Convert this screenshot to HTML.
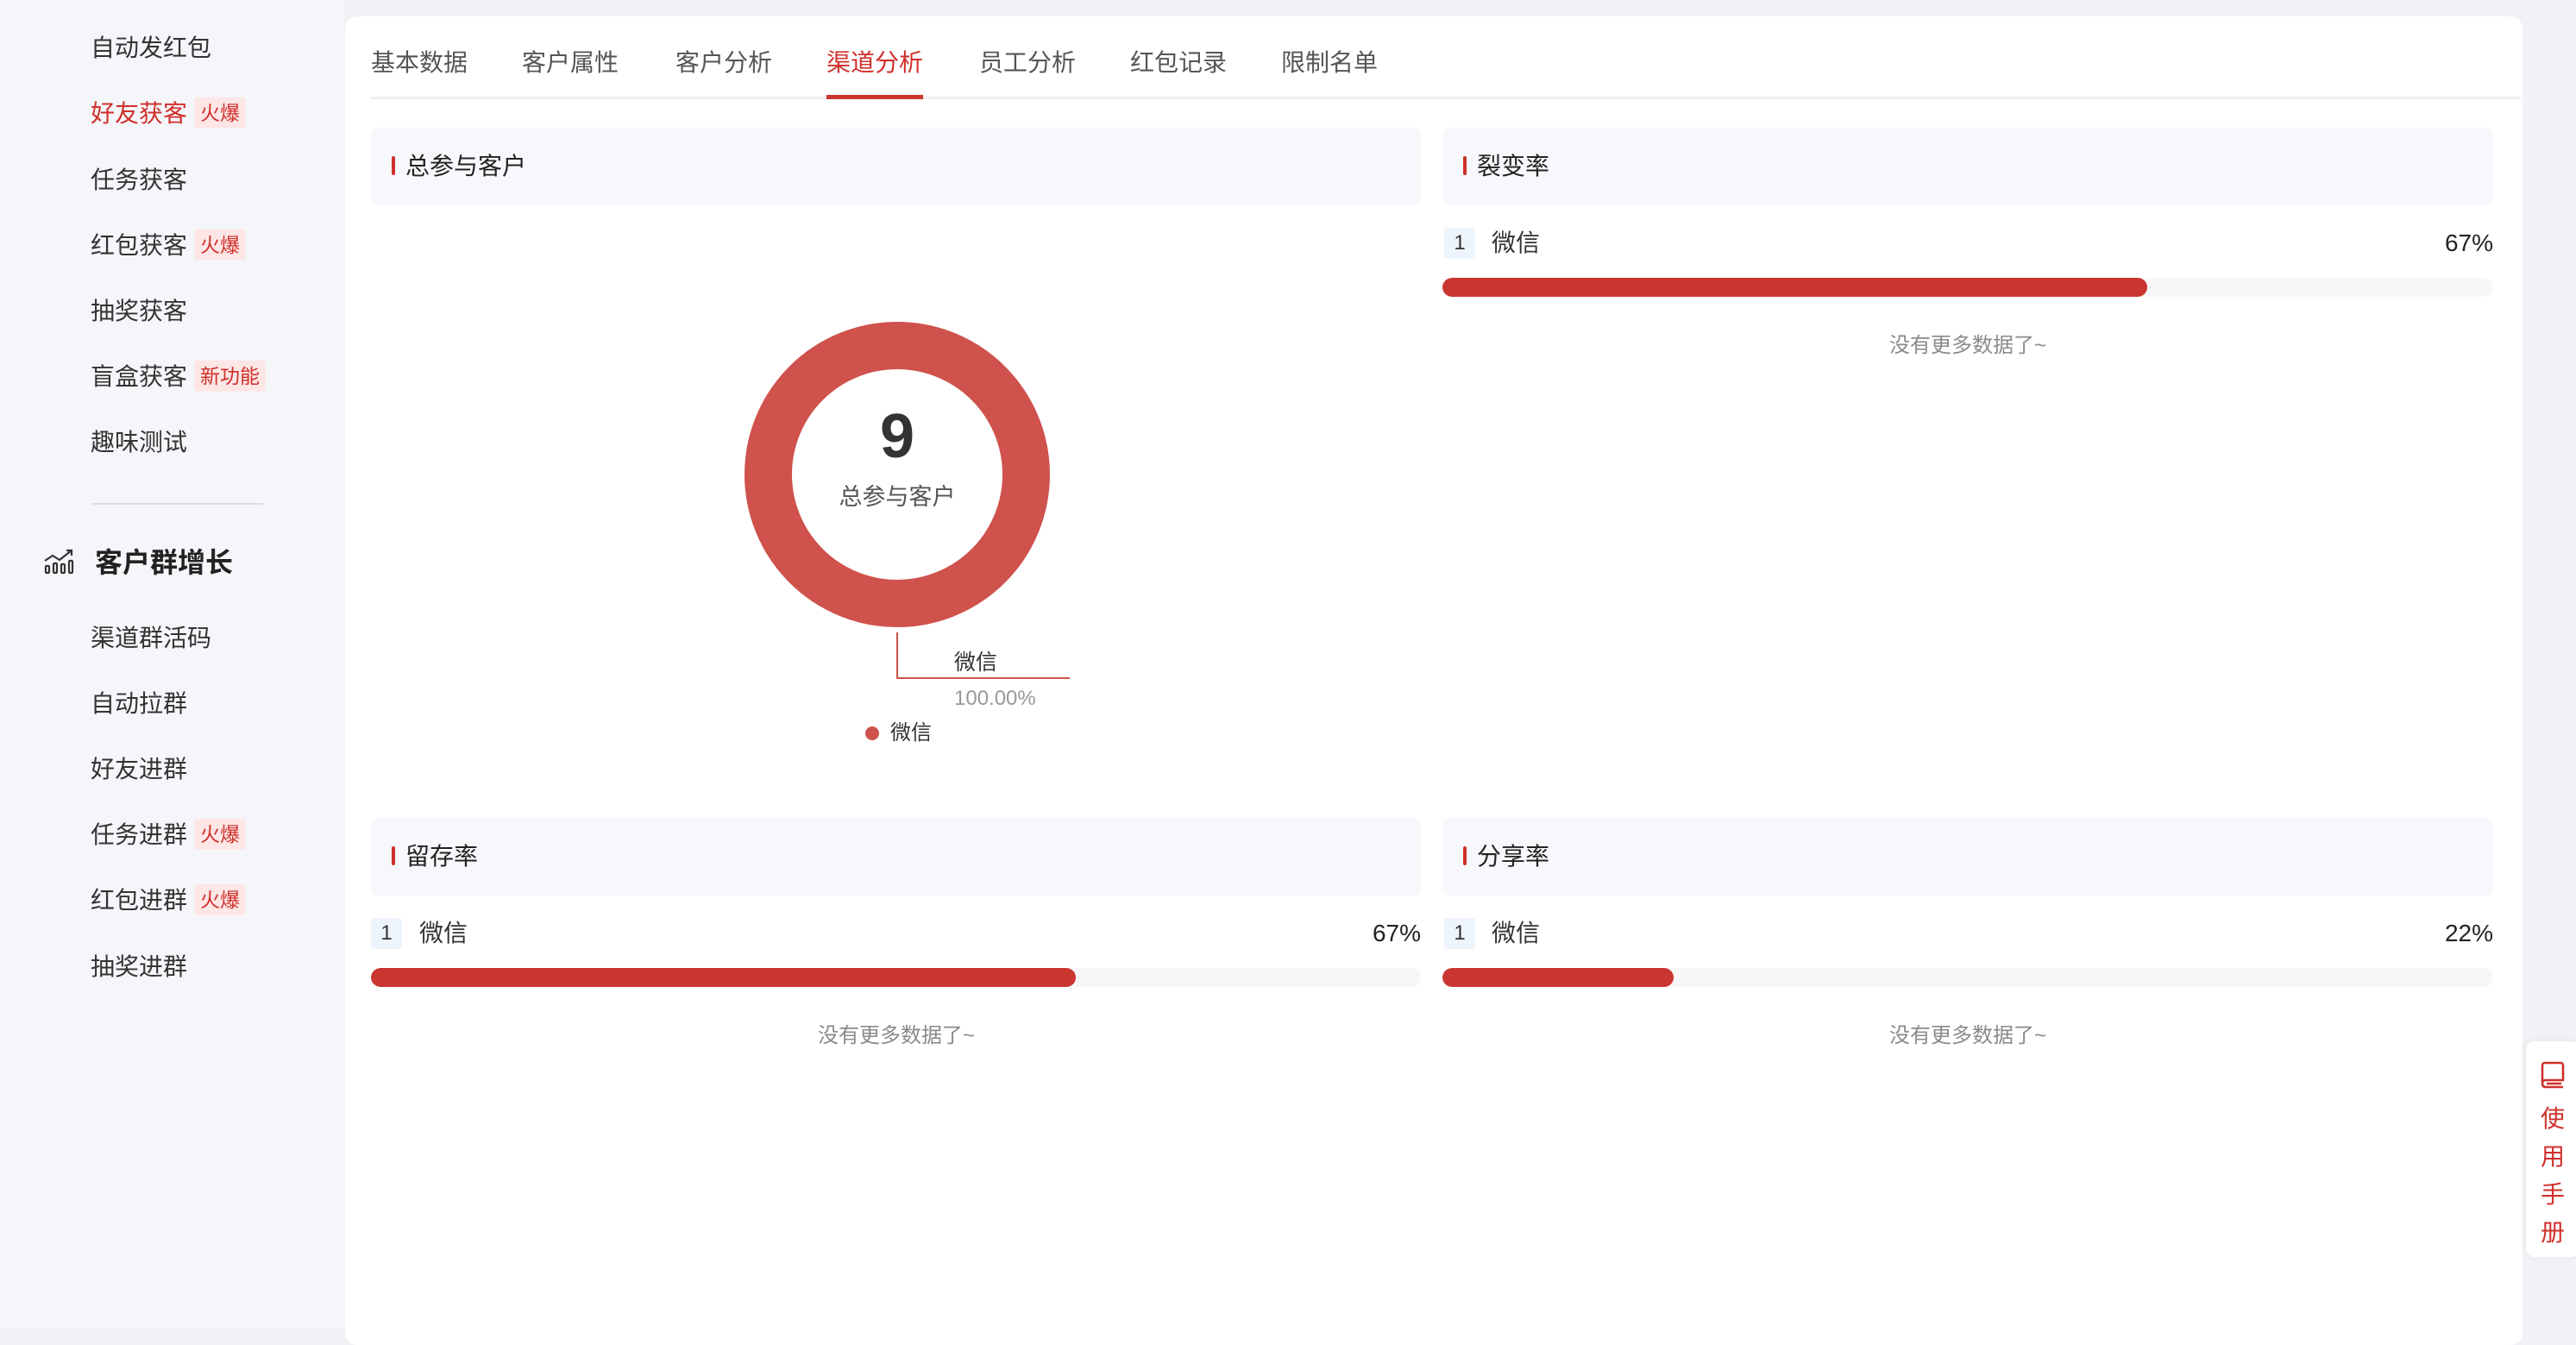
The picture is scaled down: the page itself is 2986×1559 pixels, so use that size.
<!DOCTYPE html>
<html><head><meta charset="utf-8"><style>
*{margin:0;padding:0;box-sizing:border-box}
body{width:2986px;height:1540px;overflow:hidden;background:#f0f2f5;font-family:"Liberation Sans","Noto Sans CJK SC",sans-serif;color:#333;position:relative}
.abs{position:absolute;white-space:nowrap}
#side{position:absolute;left:0;top:0;width:398px;height:1540px;background:#f5f6fa}
.si{position:absolute;left:105px;font-size:28px;line-height:40px;color:#333;transform:translateY(-48%)}
.si.red{color:#d0302b}
.badge{display:inline-block;background:#fde6e6;color:#d0302b;font-size:23px;line-height:36px;padding:0 7px;border-radius:4px;margin-left:8px;vertical-align:2px}
#card{position:absolute;left:400px;top:19px;width:2524px;height:1540px;background:#fff;border-radius:14px}
.tab{position:absolute;top:53px;font-size:28px;line-height:40px;color:#555}
.hdr{position:absolute;background:#f7f8fb;border-radius:8px;height:90px}
.hdr span{position:absolute;left:40px;top:25px;font-size:28px;line-height:40px;color:#222}
.hdr i{position:absolute;left:24px;top:33px;width:4px;height:22px;background:#d0302b;border-radius:2px}
.num{position:absolute;width:36px;height:36px;background:#eef4fb;font-size:24px;line-height:36px;text-align:center;color:#333;border-radius:3px}
.bar{position:absolute;height:22px;background:#f7f7f7;border-radius:11px;overflow:hidden}
.bar b{display:block;height:22px;background:#cb3530;border-radius:11px}
.nd{position:absolute;font-size:24px;color:#8a8a8a;transform:translateX(-50%)}
</style></head><body>
<div id="side">
<div class="si" style="top:55px">自动发红包</div>
<div class="si red" style="top:131px">好友获客<span class="badge">火爆</span></div>
<div class="si" style="top:208px">任务获客</div>
<div class="si" style="top:284px">红包获客<span class="badge">火爆</span></div>
<div class="si" style="top:360px">抽奖获客</div>
<div class="si" style="top:436px">盲盒获客<span class="badge">新功能</span></div>
<div class="si" style="top:512px">趣味测试</div>
<div class="abs" style="left:107px;top:583px;width:198px;height:2px;background:#dcdde0"></div>
<svg class="abs" style="left:50px;top:634px" width="38" height="32" viewBox="0 0 38 32" fill="none" stroke="#333" stroke-width="2.2"><path d="M2 16 L11 10 L19 15 L33 4 M27 4 H33 V10"/><rect x="3" y="22" width="4" height="8" rx="1"/><rect x="12" y="19" width="4" height="11" rx="1"/><rect x="21" y="20" width="4" height="10" rx="1"/><rect x="30" y="16" width="4" height="14" rx="1"/></svg>
<div class="abs" style="left:110px;top:631px;font-size:32px;font-weight:bold;line-height:42px;color:#222">客户群增长</div>
<div class="si" style="top:739px">渠道群活码</div>
<div class="si" style="top:815px">自动拉群</div>
<div class="si" style="top:891px">好友进群</div>
<div class="si" style="top:967px">任务进群<span class="badge">火爆</span></div>
<div class="si" style="top:1043px">红包进群<span class="badge">火爆</span></div>
<div class="si" style="top:1120px">抽奖进群</div>
</div>

<div id="card"></div>
<div class="tab" style="left:430px">基本数据</div>
<div class="tab" style="left:605px">客户属性</div>
<div class="tab" style="left:783px">客户分析</div>
<div class="tab" style="left:958px;color:#d0302b">渠道分析</div>
<div class="tab" style="left:1135px">员工分析</div>
<div class="tab" style="left:1310px">红包记录</div>
<div class="tab" style="left:1485px">限制名单</div>
<div class="abs" style="left:430px;top:112px;width:2492px;height:3px;background:#eeeeee"></div>
<div class="abs" style="left:958px;top:110px;width:112px;height:5px;background:#cb3530"></div>

<div class="hdr" style="left:430px;top:148px;width:1217px"><i></i><span>总参与客户</span></div>
<div class="hdr" style="left:1672px;top:148px;width:1218px"><i></i><span>裂变率</span></div>
<div class="hdr" style="left:430px;top:948px;width:1217px"><i></i><span>留存率</span></div>
<div class="hdr" style="left:1672px;top:948px;width:1218px"><i></i><span>分享率</span></div>

<svg class="abs" style="left:840px;top:360px" width="440" height="460">
<circle cx="200" cy="190" r="149.5" fill="none" stroke="#cf524c" stroke-width="55"/>
<path d="M200 373 V426 H400" fill="none" stroke="#cf524c" stroke-width="2"/>
</svg>
<div class="abs" style="left:940px;top:461px;width:200px;text-align:center;font-size:72px;font-weight:bold;line-height:90px;color:#333">9</div>
<div class="abs" style="left:940px;top:558px;width:200px;text-align:center;font-size:27px;line-height:36px;color:#555">总参与客户</div>
<div class="abs" style="left:1106px;top:751px;font-size:25px;line-height:34px;color:#333">微信</div>
<div class="abs" style="left:1106px;top:794px;font-size:24px;line-height:32px;color:#999">100.00%</div>
<div class="abs" style="left:1003px;top:842px;width:16px;height:16px;border-radius:50%;background:#cf524c"></div>
<div class="abs" style="left:1032px;top:833px;font-size:24px;line-height:34px;color:#333">微信</div>

<div class="num" style="left:1674px;top:264px">1</div>
<div class="abs" style="left:1729px;top:262px;font-size:28px;line-height:40px">微信</div>
<div class="abs" style="left:2790px;top:262px;width:100px;text-align:right;font-size:28px;line-height:40px;color:#222">67%</div>
<div class="bar" style="left:1672px;top:322px;width:1218px"><b style="width:817px"></b></div>
<div class="nd" style="left:2281px;top:380px">没有更多数据了~</div>

<div class="num" style="left:430px;top:1064px">1</div>
<div class="abs" style="left:486px;top:1062px;font-size:28px;line-height:40px">微信</div>
<div class="abs" style="left:1547px;top:1062px;width:100px;text-align:right;font-size:28px;line-height:40px;color:#222">67%</div>
<div class="bar" style="left:430px;top:1122px;width:1217px"><b style="width:817px"></b></div>
<div class="nd" style="left:1039px;top:1180px">没有更多数据了~</div>

<div class="num" style="left:1674px;top:1064px">1</div>
<div class="abs" style="left:1729px;top:1062px;font-size:28px;line-height:40px">微信</div>
<div class="abs" style="left:2790px;top:1062px;width:100px;text-align:right;font-size:28px;line-height:40px;color:#222">22%</div>
<div class="bar" style="left:1672px;top:1122px;width:1218px"><b style="width:268px"></b></div>
<div class="nd" style="left:2281px;top:1180px">没有更多数据了~</div>

<div class="abs" style="left:2928px;top:1207px;width:62px;height:250px;background:#fff;border-radius:10px;box-shadow:0 0 10px rgba(0,0,0,0.06)"></div>
<svg class="abs" style="left:2943px;top:1230px" width="32" height="32" viewBox="0 0 32 32" fill="none" stroke="#d0302b" stroke-width="2.6"><path d="M4 26 V5 Q4 2 7 2 H25 Q28 2 28 5 V22 H8 Q4 22 4 26 Q4 30 8 30 H28"/><path d="M9 26 H26"/></svg>
<div class="abs" style="left:2943px;top:1275px;width:32px;font-size:28px;line-height:44px;color:#d0302b;white-space:normal;text-align:center">使<br>用<br>手<br>册</div>
</body></html>
